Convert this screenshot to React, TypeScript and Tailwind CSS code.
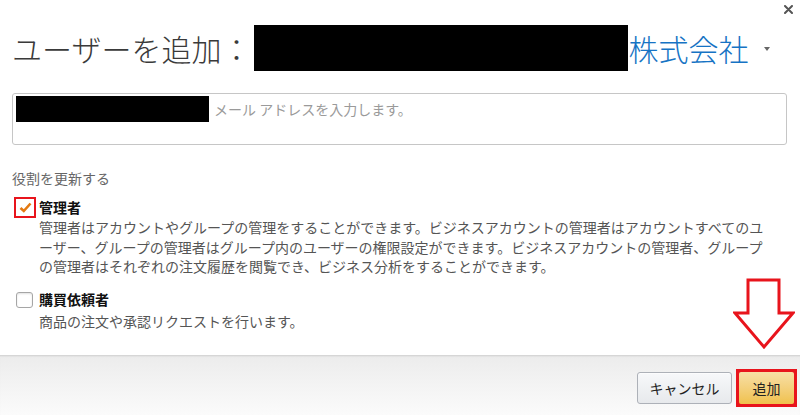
import React from 'react';

const font = "font-['Noto_Sans_CJK_JP','Noto_Sans',sans-serif]";

const adminLines = [
  '管理者はアカウントやグループの管理をすることができます。ビジネスアカウントの管理者はアカウントすべてのユ',
  'ーザー、グループの管理者はグループ内のユーザーの権限設定ができます。ビジネスアカウントの管理者、グループ',
  'の管理者はそれぞれの注文履歴を閲覧でき、ビジネス分析をすることができます。',
];

const AddUserDialog: React.FC = () => {
  return (
    <div className={`relative w-[800px] h-[415px] bg-white flex flex-col overflow-hidden ${font}`}>
      {/* close */}
      <button className="absolute top-[5px] right-[7px] w-[9px] h-[9px] text-[#555]">
        <svg viewBox="0 0 9 9" width="9" height="9">
          <path d="M1 1 L8 8 M8 1 L1 8" stroke="currentColor" strokeWidth="2" strokeLinecap="round" />
        </svg>
      </button>

      <div className="px-3">
        {/* title */}
        <div className="mt-[25px] h-[46px] flex items-center">
          <h1 className="text-[30px] leading-[46px] text-[#3a3a3a] font-light whitespace-nowrap">ユーザーを追加：</h1>
          <span className="ml-[3px] w-[374px] h-[46px] bg-black" />
          <span className="text-[30px] leading-[46px] text-[#1673c4] font-light whitespace-nowrap">株式会社</span>
          <span className="ml-[16px] mt-[2px] w-0 h-0 border-l-[3.5px] border-r-[3.5px] border-t-[4px] border-l-transparent border-r-transparent border-t-[#666]" />
        </div>

        {/* email input */}
        <div className="mt-[22px] h-[52px] w-[775px] border border-[#c6c6c6] rounded-[3px] px-[3px] pt-[2px]">
          <div className="flex items-center">
            <span className="w-[193px] h-[26px] bg-black" />
            <span className="ml-[5px] text-[14px] leading-[26px] text-[#9a9a9a]">メール アドレスを入力します。</span>
          </div>
        </div>

        {/* roles */}
        <div className="mt-[23px] text-[14px] leading-[20px] text-[#666]">役割を更新する</div>

        <div className="mt-[9px] flex">
          <div className="w-[27px] shrink-0">
            <div className="ml-[2px] w-[22px] h-[21px] border-[2.5px] border-[#e8141c] bg-white flex items-center justify-center">
              <svg viewBox="0 0 13 11" width="13" height="11">
                <path d="M1.5 6 L4.8 9 L11.5 1.5" fill="none" stroke="#e47911" strokeWidth="2.6" />
              </svg>
            </div>
          </div>
          <div>
            <div className="text-[14px] leading-[20px] font-bold text-[#111]">管理者</div>
            <div className="mt-[1px] text-[14px] leading-[19.5px] text-[#555]">
              {adminLines.map(line => (
                <div key={line} className="whitespace-nowrap">{line}</div>
              ))}
            </div>
          </div>
        </div>

        <div className="mt-[12px] flex">
          <div className="w-[27px] shrink-0 pt-[3px]">
            <div className="ml-[4px] w-[17px] h-[16px] border border-[#a6a6a6] rounded-[3px] bg-white shadow-[inset_0_1px_2px_rgba(0,0,0,0.12)]" />
          </div>
          <div>
            <div className="text-[14px] leading-[20px] font-bold text-[#111]">購買依頼者</div>
            <p className="mt-[2px] text-[14px] leading-[20px] text-[#555]">商品の注文や承認リクエストを行います。</p>
          </div>
        </div>
      </div>

      {/* annotation arrow */}
      <svg className="absolute left-[733px] top-[278px]" width="62" height="72" viewBox="0 0 62 72">
        <polygon
          points="15,2 46,2 46,35 60,35 31,69 2,35 15,35"
          fill="none"
          stroke="#e8141c"
          strokeWidth="3"
          strokeLinejoin="miter"
        />
      </svg>

      {/* footer */}
      <div className="mt-auto h-[60px] border-t border-[#d6d6d6] bg-gradient-to-b from-[#ececec] to-[#fbfbfb] shadow-[inset_0_1px_1px_rgba(0,0,0,0.04)] flex items-center justify-end gap-[4px] pr-[3px] pt-[5px]">
        <button className="w-[95px] h-[32px] rounded-[3px] border border-[#adb1b8] bg-gradient-to-b from-[#f7f8fa] to-[#e7e9ec] shadow-[inset_0_1px_0_rgba(255,255,255,0.6)] text-[14px] text-[#222]">
          キャンセル
        </button>
        <div className="w-[61px] h-[38px] border-[3px] border-[#e8141c] bg-[#e8141c]">
          <button className="w-full h-full bg-gradient-to-b from-[#f7dfa5] to-[#f0c14b] text-[14px] text-[#222] rounded-[2px]">
            追加
          </button>
        </div>
      </div>
    </div>
  );
};

export default function App() {
  return <AddUserDialog />;
}
